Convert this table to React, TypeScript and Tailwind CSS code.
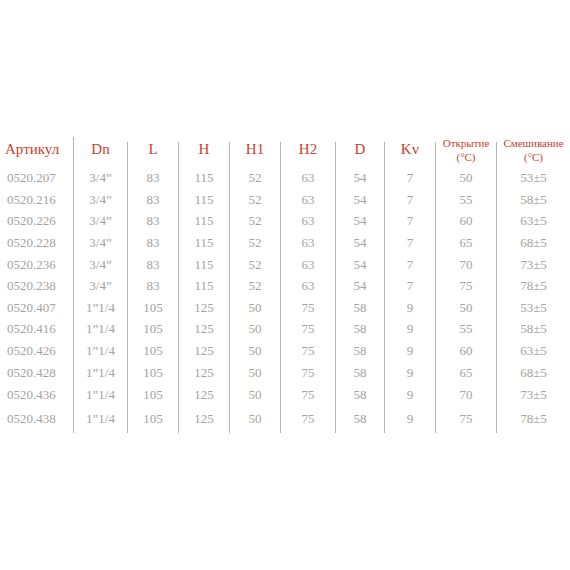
const COLS = ["w-[73px]", "w-[54px]", "w-[51px]", "w-[51px]", "w-[51px]", "w-[55px]", "w-[49px]", "w-[51px]", "w-[61px]", "w-[74px]"]

const ROWS = [
  ["0520.207", "3/4”", "83", "115", "52", "63", "54", "7", "50", "53±5"],
  ["0520.216", "3/4”", "83", "115", "52", "63", "54", "7", "55", "58±5"],
  ["0520.226", "3/4”", "83", "115", "52", "63", "54", "7", "60", "63±5"],
  ["0520.228", "3/4”", "83", "115", "52", "63", "54", "7", "65", "68±5"],
  ["0520.236", "3/4”", "83", "115", "52", "63", "54", "7", "70", "73±5"],
  ["0520.238", "3/4”", "83", "115", "52", "63", "54", "7", "75", "78±5"],
  ["0520.407", "1”1/4", "105", "125", "50", "75", "58", "9", "50", "53±5"],
  ["0520.416", "1”1/4", "105", "125", "50", "75", "58", "9", "55", "58±5"],
  ["0520.426", "1”1/4", "105", "125", "50", "75", "58", "9", "60", "63±5"],
  ["0520.428", "1”1/4", "105", "125", "50", "75", "58", "9", "65", "68±5"],
  ["0520.436", "1”1/4", "105", "125", "50", "75", "58", "9", "70", "73±5"],
  ["0520.438", "1”1/4", "105", "125", "50", "75", "58", "9", "75", "78±5"],
]

const ROW_H = ["h-[21.6px]", "h-[21.6px]", "h-[21.6px]", "h-[21.6px]", "h-[21.6px]", "h-[21.6px]", "h-[21.6px]", "h-[21.6px]", "h-[21.6px]", "h-[21.6px]", "h-[22.6px]", "h-[27px]"]

export default function App() {
  return (
    <div className="h-[570px] w-[570px] bg-white pt-[137px] font-['Liberation_Serif',serif]">
      {/* header: first divider starts higher than the rest */}
      <div className="flex h-[30px]">
        {["Артикул", "Dn", "L", "H", "H1", "H2", "D", "Kv"].map((h, i) => (
          <div key={h} className={`${COLS[i]} flex items-start ${i === 0 ? "justify-start pl-[5px]" : i === 1 ? "justify-center border-l border-[#b4b4b4]" : "mt-[5px] justify-center border-l border-[#b4b4b4]"}`}>
            <span className={`text-[15px] leading-[22px] text-[#c9412d] ${i > 1 ? "-mt-[4px]" : "mt-[1px]"}`}>{h}</span>
          </div>
        ))}
        {["Открытие", "Смешивание"].map((h, i) => (
          <div key={h} className={`${COLS[8 + i]} mt-[5px] flex flex-col items-center border-l border-[#b4b4b4] text-[11px] leading-[14px] text-[#c9412d]`}>
            <span className="-mt-[6px]">{h}</span>
            <span>(°C)</span>
          </div>
        ))}
      </div>

      {/* rows */}
      {ROWS.map((r, ri) => (
        <div key={r[0]} className={`flex ${ROW_H[ri]}`}>
          {r.map((v, i) => (
            <div key={i} className={`${COLS[i]} flex items-center text-[13px] leading-none text-[#a3a3a3] ${i === 0 ? "justify-start pl-[7px]" : "justify-center border-l border-[#b4b4b4]"} ${ri === 11 ? "pb-[2px]" : ""}`}>
              {v}
            </div>
          ))}
        </div>
      ))}
    </div>
  )
}
